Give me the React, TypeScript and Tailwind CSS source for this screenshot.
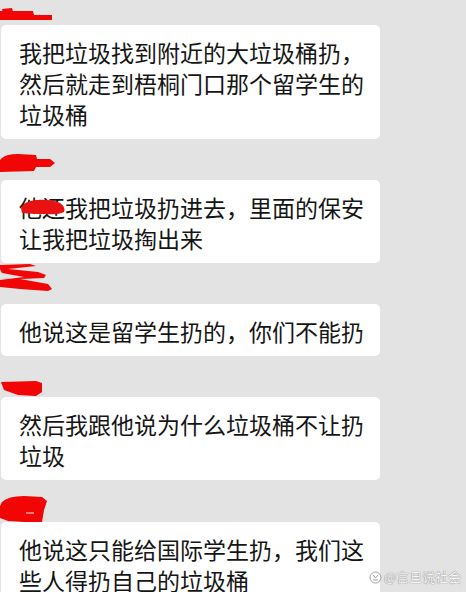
import React from "react";

const font = { fontFamily: '"Noto Sans CJK SC", "Noto Sans", sans-serif' };
const RED = "#f20505";

function Bubble({ lines }: { lines: string[] }) {
  return (
    <div className="ml-px w-[379px] rounded-[5px] bg-white pl-[18px] pr-2 pt-[12px] pb-[9px] text-[23px] leading-[31px] text-[#151515]">
      {lines.map((l, i) => (
        <div key={i} className="whitespace-nowrap">
          {l}
        </div>
      ))}
    </div>
  );
}

export default function App() {
  return (
    <div className="relative h-[592px] w-[466px] overflow-hidden bg-[#e3e3e3]" style={font}>
      <div className="flex flex-col">
        <svg width="60" height="25" viewBox="0 0 60 25" className="block">
          <path d="M2 9 L12 8 L13 12 L3 13 Z" fill={RED} />
          <path d="M0 11 L33 11 L34 15 L52 15 L52 20 L0 20 Z" fill={RED} />
        </svg>
        <Bubble lines={["我把垃圾找到附近的大垃圾桶扔，", "然后就走到梧桐门口那个留学生的", "垃圾桶"]} />

        <svg width="60" height="41" viewBox="0 0 60 41" className="block">
          <path d="M2 19 Q6 15 18 15 L36 16 L37 20 L50 20 L55 24 L50 28 L36 28 L34 32 L0 33 L0 21 Z" fill={RED} />
        </svg>
        <div className="relative">
          <Bubble lines={["他还我把垃圾扔进去，里面的保安", "让我把垃圾掏出来"]} />
          <svg width="50" height="18" viewBox="0 0 50 18" className="absolute left-[18px] top-[18px]">
            <path d="M3 10 Q6 3 18 2 Q34 1 42 5 Q48 9 46 14 Q40 17 28 16 Q14 16 4 15 Z" fill="#e81212" />
          </svg>
        </div>

        <svg width="60" height="41" viewBox="0 0 60 41" className="block">
          <path d="M0 2 L30 1 L36 3 L8 6 L38 9 L46 12 L44 15 L20 16 L48 21 L52 26 L48 28 L20 26 L0 24 L0 17 L24 14 L2 10 L0 6 Z" fill={RED} />
        </svg>
        <Bubble lines={["他说这是留学生扔的，你们不能扔"]} />

        <svg width="60" height="41" viewBox="0 0 60 41" className="block">
          <path d="M1 26 L36 25 L42 27 L42 36 L36 40 L18 39 L4 34 Z" fill={RED} />
        </svg>
        <Bubble lines={["然后我跟他说为什么垃圾桶不让扔", "垃圾"]} />

        <svg width="60" height="42" viewBox="0 0 60 42" className="block">
          <path d="M2 22 Q8 16 24 16 L42 17 L47 21 L44 30 L42 42 L24 42 L8 41 L0 38 L0 26 Z" fill={RED} />
          <path d="M26 33 L34 33" stroke="#f7a0a0" strokeWidth="1.5" />
        </svg>
        <Bubble lines={["他说这只能给国际学生扔，我们这", "些人得扔自己的垃圾桶"]} />
      </div>

      <div
        className="absolute left-[369px] top-[569px] flex items-center gap-[2px] text-[13px] leading-[16px] text-[#f4f4f4]"
        style={{ textShadow: "0 0 1px #8a8a8a, 0 0 1px #8a8a8a" }}
      >
        <svg width="13" height="13" viewBox="0 0 13 13">
          <circle cx="6.5" cy="6.5" r="5.5" fill="none" stroke="#a0a0a0" strokeWidth="1" />
          <path d="M4 4 L6.5 7 L9 4 M4 9 L9 9" stroke="#a0a0a0" strokeWidth="1" fill="none" />
        </svg>
        <span>@言旦说社会</span>
      </div>
    </div>
  );
}
